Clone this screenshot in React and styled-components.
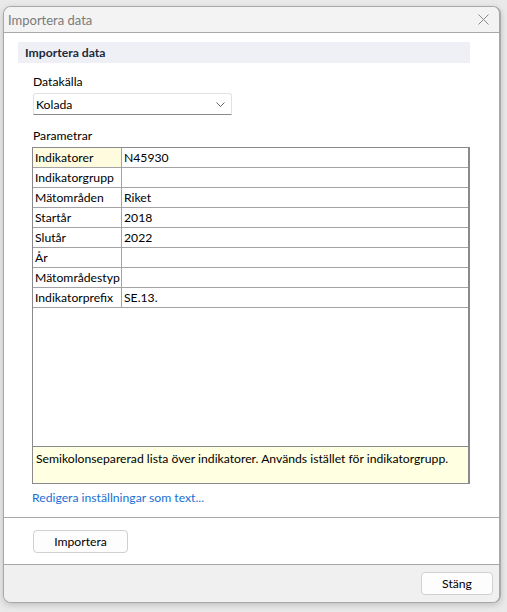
import React from "react";
import styled, { createGlobalStyle } from "styled-components";

const GlobalStyle = createGlobalStyle`
  html, body {
    margin: 0;
    padding: 0;
    background: #e9e9e9;
  }
  body {
    font-family: Lato, "Noto Sans", "Liberation Sans", sans-serif;
    font-size: 12.2px;
    color: #000;
  }
`;

// Window frame
const Desk = styled.div`
  width: 507px;
  height: 612px;
  box-sizing: border-box;
  padding: 6px 6px 9px 3px;
  display: flex;
`;

const Window = styled.div`
  flex: 1;
  display: flex;
  flex-direction: column;
  border: 1px solid #a8a8a8;
  border-right-width: 2px;
  border-radius: 8px;
  overflow: hidden;
  background: #f0f0f0;
  box-shadow: 0 2px 6px rgba(0, 0, 0, 0.18);
`;

const TitleBar = styled.div`
  height: 25px;
  flex: none;
  display: flex;
  align-items: center;
  justify-content: space-between;
  padding: 0 10px 0 4px;
  background: #f3f3f3;
  border-bottom: 1px solid #a8a8a8;
  color: #7a7a7a;
  font-size: 13px;
`;

const Body = styled.div`
  flex: 1;
  display: flex;
  flex-direction: column;
  background: #fff;
  border-bottom: 1px solid #a8a8a8;
`;

const Main = styled.div`
  flex: 1;
  display: flex;
  flex-direction: column;
  padding: 9px 29px 0 14px;
`;

const SectionHeader = styled.div`
  height: 21px;
  display: flex;
  align-items: center;
  padding-left: 7px;
  background: #eef0f5;
  font-weight: bold;
  color: #1c2a3c;
`;

const Section = styled.div`
  display: flex;
  flex-direction: column;
  padding-left: 14px;
`;

const Label = styled.div`
  margin-top: ${({ $top }) => $top}px;
  height: 16px;
  line-height: 16px;
  padding-left: 1px;
`;

const Combo = styled.div`
  margin: 3px 0 0 1px;
  width: 199px;
  height: 22px;
  box-sizing: border-box;
  display: flex;
  align-items: center;
  justify-content: space-between;
  padding: 0 6px 0 2px;
  border: 1px solid #e2e2e2;
  border-bottom: 1px solid #8a8a8a;
  border-radius: 3px 3px 0 0;
`;

const Grid = styled.div`
  margin-top: 3px;
  height: 337px;
  box-sizing: border-box;
  display: flex;
  flex-direction: column;
  border: 1px solid #8a8a8e;
  border-right-width: 2px;
`;

const Row = styled.div`
  height: 20px;
  flex: none;
  display: grid;
  grid-template-columns: 89px 1fr;
  border-bottom: 1px solid #a3a3a6;
  box-sizing: border-box;
`;

const Cell = styled.div`
  display: flex;
  align-items: center;
  padding-left: 2px;
  background: ${({ $selected }) => ($selected ? "#fffbdf" : "#fff")};
  border-right: ${({ $name }) => ($name ? "1px solid #a3a3a6" : "none")};
  white-space: nowrap;
  overflow: hidden;
`;

const Filler = styled.div`
  flex: 1;
`;

const Description = styled.div`
  height: 37px;
  flex: none;
  padding: 4px 3px;
  box-sizing: border-box;
  background: #ffffe1;
  border-top: 1px solid #8a8a8e;
  white-space: nowrap;
`;

const Link = styled.a`
  margin-top: 6px;
  height: 16px;
  line-height: 16px;
  color: #1a6fd4;
  text-decoration: none;
  cursor: pointer;
  align-self: flex-start;
`;

const ActionBar = styled.div`
  flex: none;
  height: 46px;
  display: flex;
  align-items: center;
  padding-left: 29px;
  border-top: 1px solid #a8a8a8;
`;

const Button = styled.button`
  width: ${({ $w }) => $w}px;
  height: 23px;
  font-family: inherit;
  font-size: 12.2px;
  color: #000;
  background: #fdfdfd;
  border: 1px solid #d0d0d0;
  border-radius: 4px;
  padding: 0;
`;

const Footer = styled.div`
  height: 37px;
  flex: none;
  display: flex;
  align-items: center;
  justify-content: flex-end;
  padding-right: 6px;
  background: #f0f0f0;
`;

const rows = [
  ["Indikatorer", "N45930", true],
  ["Indikatorgrupp", ""],
  ["Mätområden", "Riket"],
  ["Startår", "2018"],
  ["Slutår", "2022"],
  ["År", ""],
  ["Mätområdestyp", ""],
  ["Indikatorprefix", "SE.13."],
];

const CloseIcon = () => (
  <svg width="11" height="11" viewBox="0 0 11 11">
    <path d="M0.5 0.5 L10.5 10.5 M10.5 0.5 L0.5 10.5" stroke="#8a8a8a" strokeWidth="1" fill="none" />
  </svg>
);

const Chevron = () => (
  <svg width="9" height="5" viewBox="0 0 9 5">
    <path d="M0.5 0.5 L4.5 4.5 L8.5 0.5" stroke="#666" strokeWidth="1" fill="none" />
  </svg>
);

export default function App() {
  return (
    <>
      <GlobalStyle />
      <Desk>
        <Window>
          <TitleBar>
            Importera data
            <CloseIcon />
          </TitleBar>
          <Body>
            <Main>
              <SectionHeader>Importera data</SectionHeader>
              <Section>
                <Label $top={11}>Datakälla</Label>
                <Combo>
                  Kolada
                  <Chevron />
                </Combo>
                <Label $top={13}>Parametrar</Label>
                <Grid>
                  {rows.map(([name, value, selected]) => (
                    <Row key={name}>
                      <Cell $name $selected={selected}>{name}</Cell>
                      <Cell>{value}</Cell>
                    </Row>
                  ))}
                  <Filler />
                  <Description>
                    Semikolonseparerad lista över indikatorer. Används istället för indikatorgrupp.
                  </Description>
                </Grid>
                <Link>Redigera inställningar som text...</Link>
              </Section>
            </Main>
            <ActionBar>
              <Button $w={95}>Importera</Button>
            </ActionBar>
          </Body>
          <Footer>
            <Button $w={72}>Stäng</Button>
          </Footer>
        </Window>
      </Desk>
    </>
  );
}
